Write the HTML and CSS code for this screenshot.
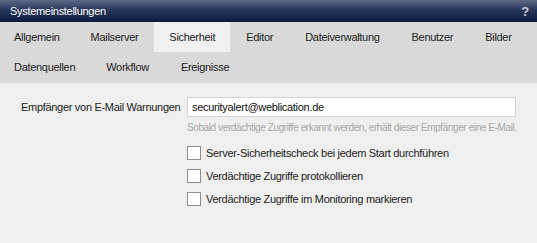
FILE: index.html
```html
<!DOCTYPE html>
<html lang="de">
<head>
<meta charset="utf-8">
<title>Systemeinstellungen</title>
<link rel="stylesheet" href="styles.css">
</head>
<body>
<div class="dialog">
  <div class="titlebar">
    <span class="title">Systemeinstellungen</span>
    <span class="help">?</span>
  </div>
  <div class="tabs">
    <div class="tabrow">
      <span class="tab first">Allgemein</span>
      <span class="tab">Mailserver</span>
      <span class="tab active">Sicherheit</span>
      <span class="tab">Editor</span>
      <span class="tab">Dateiverwaltung</span>
      <span class="tab">Benutzer</span>
      <span class="tab">Bilder</span>
    </div>
    <div class="tabrow">
      <span class="tab first">Datenquellen</span>
      <span class="tab">Workflow</span>
      <span class="tab">Ereignisse</span>
    </div>
  </div>
  <div class="content">
    <div class="field">
      <label class="label">Empfänger von E-Mail Warnungen</label>
      <div class="control">
        <input class="input" type="text" value="securityalert@weblication.de">
        <div class="hint">Sobald verdächtige Zugriffe erkannt werden, erhält dieser Empfänger eine E-Mail.</div>
      </div>
    </div>
    <div class="checks">
      <label class="check"><span class="box"></span>Server-Sicherheitscheck bei jedem Start durchführen</label>
      <label class="check"><span class="box"></span>Verdächtige Zugriffe protokollieren</label>
      <label class="check"><span class="box"></span>Verdächtige Zugriffe im Monitoring markieren</label>
    </div>
  </div>
</div>
</body>
</html>
```
FILE: styles.css
```css
html, body {
  margin: 0;
  padding: 0;
  background: #efefef;
}
body {
  font-family: "Liberation Sans", Arial, sans-serif;
  font-size: 11px;
  letter-spacing: -0.3px;
  color: #222;
  width: 537px;
  height: 243px;
  overflow: hidden;
}
.dialog {
  display: flex;
  flex-direction: column;
  height: 243px;
}
.titlebar {
  height: 22px;
  background: linear-gradient(to bottom, #5d6a86 0%, #27375a 45%, #0c1a3e 100%);
  display: flex;
  align-items: center;
  justify-content: space-between;
  padding: 0 8px 0 10px;
  color: #fff;
}
.title {
  font-size: 11px;
}
.help {
  font-weight: bold;
  font-size: 13px;
  color: #c8cdd8;
}
.tabs {
  background: #d9d9d9;
  display: flex;
  flex-direction: column;
}
.tabrow {
  display: flex;
}
.tabrow:first-child {
  height: 30px;
}
.tabrow:last-child {
  height: 31px;
}
.tab {
  display: flex;
  align-items: center;
  color: #222;
  padding: 0 16px;
  white-space: nowrap;
}
.tab.first {
  padding: 0 15px 0 14px;
}
.tab.active {
  padding: 0 15px;
  background: #f0f0f0;
}
.tabrow:last-child .tab {
  padding-bottom: 1px;
}

.content {
  flex: 1;
  background: #efefef;
  padding: 14px 21px 0 21px;
}
.field {
  display: flex;
  gap: 10px;
}
.label {
  width: 156px;
  text-align: right;
  line-height: 20px;
  color: #222;
  white-space: nowrap;
}
.control {
  display: flex;
  flex-direction: column;
}
.input {
  width: 329px;
  height: 20px;
  box-sizing: border-box;
  border: 1px solid #d5d5d5;
  background: #fff;
  font-family: "Liberation Sans", Arial, sans-serif;
  font-size: 11px;
  letter-spacing: -0.3px;
  color: #111;
  padding: 0 4px;
  margin: 0;
  outline: none;
}
.hint {
  margin-top: 5px;
  font-size: 10px;
  letter-spacing: -0.4px;
  color: #a8a8a8;
  white-space: nowrap;
}
.checks {
  margin-top: 13px;
  margin-left: 166px;
  display: flex;
  flex-direction: column;
  gap: 9px;
}
.check {
  display: flex;
  align-items: center;
  gap: 5px;
  height: 14px;
  color: #222;
  white-space: nowrap;
}
.box {
  width: 12px;
  height: 12px;
  border: 1px solid #8e8e8e;
  background: #fff;
  flex: none;
}
```
